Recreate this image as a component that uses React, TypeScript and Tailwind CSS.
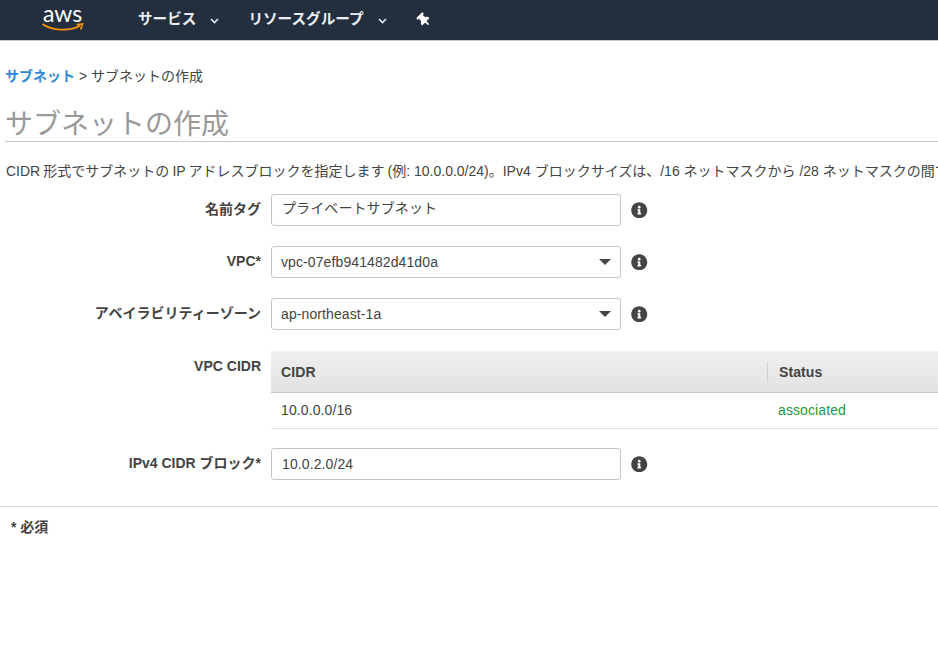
import React from "react";
import { FaInfoCircle, FaThumbtack } from "react-icons/fa";

const font = { fontFamily: '"Liberation Sans", "Noto Sans CJK JP", sans-serif' };

function Chevron() {
  return (
    <svg width="9" height="6" viewBox="0 0 9 6" className="ml-[14px] mt-[2px]">
      <path d="M1 1 L4.5 4.5 L8 1" fill="none" stroke="#e6e8ea" strokeWidth="1.6" />
    </svg>
  );
}

function Row({ label, children, className = "" }: { label: string; children: React.ReactNode; className?: string }) {
  return (
    <div className={`flex items-center ${className}`}>
      <div className="w-[261px] shrink-0 pb-[2px] text-right text-[14px] font-bold text-[#444444]">{label}</div>
      <div className="ml-[10px] w-[350px] shrink-0">{children}</div>
      <FaInfoCircle className="ml-[10px] text-[16.5px] text-[#444444]" />
    </div>
  );
}

function Field({ value, select = false, pad = "pl-[10px]", lift = "" }: { value: string; select?: boolean; pad?: string; lift?: string }) {
  return (
    <div className={`flex h-8 items-center justify-between rounded-[3px] border border-[#c6c6c6] bg-white pr-[9px] text-[14px] tracking-[0.1px] text-[#444444] ${pad}`}>
      <span className={lift}>{value}</span>
      {select && <span className="h-0 w-0 border-x-[6px] border-t-[6px] border-x-transparent border-t-[#444444]" />}
    </div>
  );
}

export default function App() {
  return (
    <div style={font} className="h-[650px] w-[938px] overflow-hidden bg-white text-[#444444]">
      <header className="flex h-[41px] items-center border-b border-[#c8cacc] bg-[#232f3e]">
        <div className="relative ml-[42px] h-[40px] w-[42px] shrink-0">
          <span style={{ fontFamily: "Lato, sans-serif" }} className="absolute left-[1px] top-[1px] text-[23px] leading-[24px] text-white">aws</span>
          <svg width="42" height="12" viewBox="0 0 42 12" className="absolute left-0 top-[22px]">
            <path d="M0.5 2 C9 8.5 28 10 38 3.5" fill="none" stroke="#f79400" strokeWidth="1.8" />
            <path d="M34.5 2.6 L40.5 2 L38.6 7.6" fill="none" stroke="#f79400" strokeWidth="1.6" />
          </svg>
        </div>
        <nav className="ml-[54px] flex items-center text-[14.6px] font-bold text-[#eceff1]">
          <span className="flex items-center">サービス<Chevron /></span>
          <span className="ml-[29px] flex items-center">リソースグループ<Chevron /></span>
          <FaThumbtack className="ml-[30px] -rotate-45 text-[14px] text-white" />
        </nav>
      </header>

      <div className="pl-[5px] pt-[26px] text-[14px] leading-[18px]">
        <span className="font-bold text-[#2f88d8]">サブネット</span>
        <span className="text-[#444444]"> &gt; サブネットの作成</span>
      </div>

      <h1 className="ml-[5px] mt-[23px] h-[34px] border-b border-[#c8c8c8] text-[28px] font-normal leading-[34px] text-[#999999]">サブネットの作成</h1>

      <p className="mt-[20px] whitespace-nowrap pl-[6px] text-[14px] leading-[18px] text-[#444444]">
        <span className="[word-spacing:-0.8px]">CIDR 形式でサブネットの IP アドレスブロックを指定します (例:</span> 10.0.0.0/24)。IPv4 ブロックサイズは、/16 ネットマスクから /28 ネットマスクの間で
      </p>

      <div className="mt-[14px] flex flex-col">
        <Row label="名前タグ"><Field value="プライベートサブネット" lift="pb-[3px]" /></Row>
        <Row label="VPC*" className="mt-5"><Field value="vpc-07efb941482d41d0a" select pad="pl-[9px]" /></Row>
        <Row label="アベイラビリティーゾーン" className="mt-5"><Field value="ap-northeast-1a" select pad="pl-[9px]" /></Row>

        <div className="mt-[21px] flex items-start">
          <div className="w-[261px] shrink-0 pt-[6px] text-right text-[14px] font-bold leading-[18px] text-[#444444]">VPC CIDR</div>
          <div className="ml-[10px] w-[667px] shrink-0 text-[14px] tracking-[0.1px]">
            <div className="flex h-[42px] items-center border-b border-[#c8c8c8] bg-gradient-to-b from-[#f0f0f0] to-[#e2e2e2] pt-[1px] font-bold text-[#444444]">
              <span className="w-[496px] pl-[10px]">CIDR</span>
              <span className="h-[20px] w-px bg-[#d0d0d0]" />
              <span className="pl-[11px]">Status</span>
            </div>
            <div className="flex h-[36px] items-center border-b border-[#e2e2e2]">
              <span className="w-[507px] pl-[10px]">10.0.0.0/16</span>
              <span className="text-[#1d9a3a]">associated</span>
            </div>
          </div>
        </div>

        <Row label="IPv4 CIDR ブロック*" className="mt-[19px]"><Field value="10.0.2.0/24" /></Row>
      </div>

      <div className="mt-[26px] border-t border-[#dddddd] pl-[11px] pt-[11px] text-[14px] font-bold leading-[18px] text-[#444444]">* 必須</div>
    </div>
  );
}
